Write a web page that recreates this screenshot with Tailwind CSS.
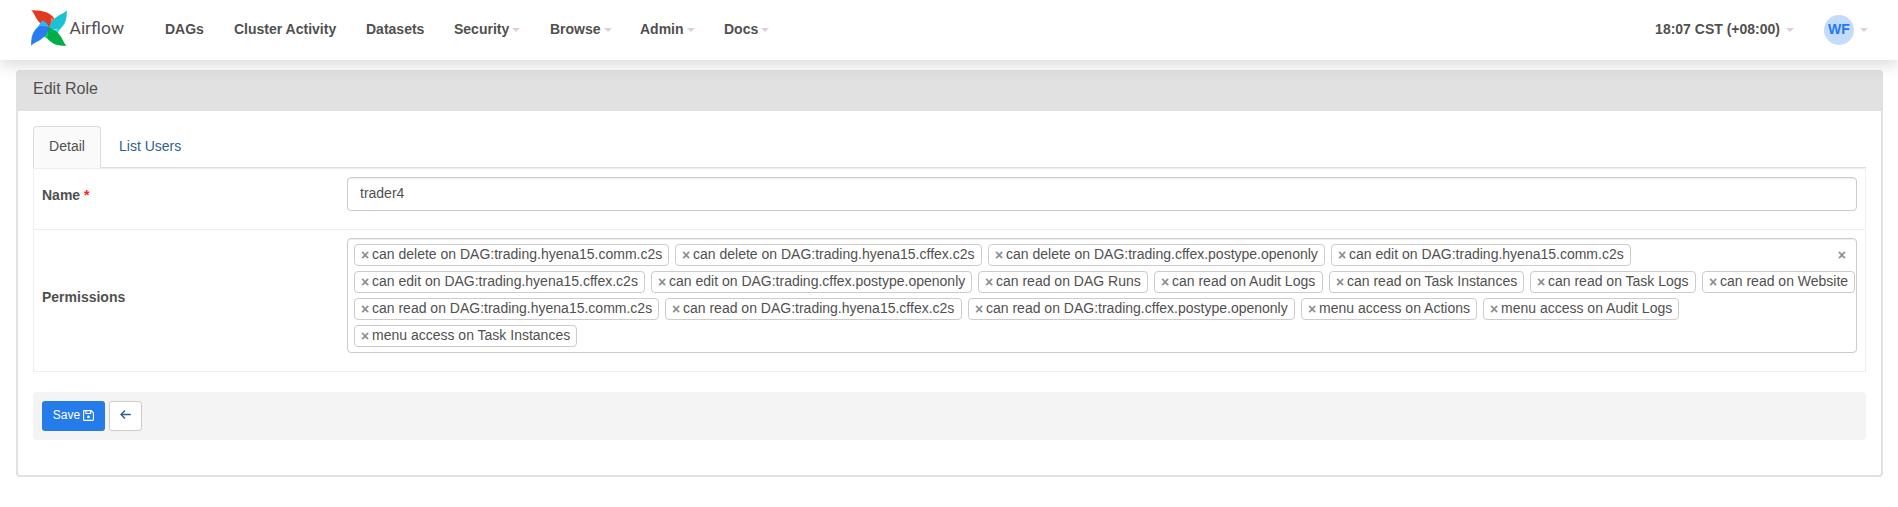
<!DOCTYPE html>
<html lang="en">
<head>
<meta charset="utf-8">
<title>Airflow - Edit Role</title>
<script src="https://cdn.jsdelivr.net/npm/@tailwindcss/browser@4"></script>
</head>
<body class="h-[507px] overflow-hidden bg-white font-['Liberation_Sans',sans-serif] text-sm leading-5 text-[#51504f]">
<nav class="relative z-10 flex h-[60px] items-center bg-white pl-[31px] pr-[30px] font-bold shadow-[0_5px_15px_rgba(0,0,0,0.15)]">
  <a class="mr-10 flex h-9 w-[94px] -translate-y-0.5">
    <svg class="h-9 w-[94px]" viewBox="0 0 94 36">
      <defs>
        <path id="blade" d="M18 18.200C20 16 23 13 24.800 11C21 2.500 12 0 .2 .2C5 4 4.500 13.500 18 18.200Z"/>
        <path id="fold" d="M18 18.200C19.800 15 20.300 11 19.900 7.800C22.500 8.600 24 9.800 25.500 11.500C24 15 21.500 17 18 18.200Z"/>
      </defs>
      <use href="#blade" fill="#e43921"/>
      <use href="#fold" fill="#ff7557"/>
      <use href="#fold" fill="#11e1ee" transform="rotate(90 18 18)"/>
      <use href="#fold" fill="#04d659" transform="rotate(180 18 18)"/>
      <use href="#fold" fill="#27b8ff" transform="rotate(270 18 18)"/>
      <path fill="#1cc2d3" transform="rotate(90 18 18)" d="M18 18.200C20 16 19.800 11 19.900 7.800C14 1 8 0 .2 .2C5 4 4.500 13.500 18 18.200Z"/>
      <path fill="#00ad46" transform="rotate(180 18 18)" d="M18 18.200C20 16 19.800 11 19.900 7.800C14 1 8 0 .2 .2C5 4 4.500 13.500 18 18.200Z"/>
      <path fill="#277def" transform="rotate(270 18 18)" d="M18 18.200C20 16 19.800 11 19.900 7.800C14 1 8 0 .2 .2C5 4 4.500 13.500 18 18.200Z"/>
      <circle cx="18" cy="18" r=".6" fill="#51504f"/>
      <text x="38.500" y="24" fill="#51504f" font-size="17" font-weight="400" font-family="Roboto, sans-serif" textLength="54.500" lengthAdjust="spacingAndGlyphs">Airflow</text>
    </svg>
  </a>
  <div class="flex -translate-y-px items-center whitespace-nowrap">
    <a class="w-[69px]">DAGs</a>
    <a class="w-[132px]">Cluster Activity</a>
    <a class="w-[88px]">Datasets</a>
    <a class="flex w-24 items-center gap-[3px]">Security<svg class="mt-0.5 h-1 w-2 shrink-0" viewBox="0 0 8 4"><path fill="#e0cde0" d="M0 0h8L4 4z"/></svg></a>
    <a class="flex w-[90px] items-center gap-[3px]">Browse<svg class="mt-0.5 h-1 w-2 shrink-0" viewBox="0 0 8 4"><path fill="#e0cde0" d="M0 0h8L4 4z"/></svg></a>
    <a class="flex w-[84px] items-center gap-[3px]">Admin<svg class="mt-0.5 h-1 w-2 shrink-0" viewBox="0 0 8 4"><path fill="#e0cde0" d="M0 0h8L4 4z"/></svg></a>
    <a class="flex items-center gap-[3px]">Docs<svg class="mt-0.5 h-1 w-2 shrink-0" viewBox="0 0 8 4"><path fill="#e0cde0" d="M0 0h8L4 4z"/></svg></a>
  </div>
  <div class="ml-auto flex items-center">
    <a class="mr-[30px] flex -translate-y-px items-center gap-1.5">18:07 CST (+08:00)<svg class="mt-0.5 h-1 w-2 shrink-0" viewBox="0 0 8 4"><path fill="#e0cde0" d="M0 0h8L4 4z"/></svg></a>
    <span class="flex size-[30px] items-center justify-center rounded-full bg-[#c2dcfa] pb-0.5 text-[#2478ee]">WF</span>
    <svg class="ml-1.5 h-1 w-2" viewBox="0 0 8 4"><path fill="#e0cde0" d="M0 0h8L4 4z"/></svg>
  </div>
</nav>

<main class="mx-4 mt-2.5 h-[407px] w-[1867px] rounded border-2 border-[#e1e1e1]">
  <h1 class="h-[39px] bg-[#e1e1e1] pl-[15px] pt-[7px] text-base leading-5">Edit Role</h1>
  <div class="px-[15px] pt-[15px]">
    <div class="flex h-[42px] border-b border-[#ddd]">
      <a class="mr-0.5 flex h-[42px] w-[68px] justify-center rounded-t border border-b-0 border-[#ddd] bg-[#fafafa] pt-[9px]">Detail</a>
      <a class="pl-4 pt-2.5 text-[#2f5f8f]">List Users</a>
    </div>
    <div class="h-[204px] border border-[#eee]">
      <div class="flex h-[61px] border-b border-[#eee] pl-2 pt-2">
        <label class="w-[305px] pt-2 font-bold">Name <span class="text-[#ff2020]">*</span></label>
        <div class="h-[34px] w-[1510px] rounded border border-[#ccc] pl-3 pt-[5px] shadow-[inset_0_1px_1px_rgba(0,0,0,0.075)]">trader4</div>
      </div>
      <div class="flex pl-2 pt-2">
        <label class="w-[305px] pt-[49px] font-bold">Permissions</label>
        <div class="relative flex h-[115px] w-[1510px] flex-col gap-[5px] rounded border border-[#ccc] pl-1.5 pt-[5px] shadow-[inset_0_1px_1px_rgba(0,0,0,0.075)]" id="perms"></div>
      </div>
    </div>
    <div class="mt-5 flex h-12 w-full gap-1 rounded bg-[#f4f4f4] pl-[9px] pt-[9px]">
      <button class="flex h-[30px] w-[63px] items-center justify-center gap-[3px] rounded-[3px] bg-[#267bea] pb-0.5 text-xs text-white">Save
        <svg class="h-[11px] w-[11px]" viewBox="0 0 11 11" fill="none" stroke="#fff" stroke-width="1.100"><path d="M1.200.6H8.200L10.400 2.800V9.800Q10.400 10.400 9.800 10.400H1.200Q.6 10.400.6 9.800V1.200Q.6.6 1.200.6ZM2.900.6V3.500H7.700V.6"/><circle cx="5.500" cy="6.900" r="1.300" fill="#fff" stroke="none"/></svg>
      </button>
      <button class="flex h-[30px] w-[33px] items-center justify-center rounded-[3px] border border-[#ccc] bg-white pb-[3px]">
        <svg class="h-[9px] w-[11px]" viewBox="0 0 11 9" fill="none" stroke="#2f5f8f" stroke-width="1.400"><path d="M5 .5L1 4.500L5 8.500M1 4.500H10.800"/></svg>
      </button>
    </div>
  </div>
</main>
<script>
// Each permission is [label, tag width in px].
const rows = [
  [['can delete on DAG:trading.hyena15.comm.c2s',315],['can delete on DAG:trading.hyena15.cffex.c2s',307],['can delete on DAG:trading.cffex.postype.openonly',337],['can edit on DAG:trading.hyena15.comm.c2s',300]],
  [['can edit on DAG:trading.hyena15.cffex.c2s',291],['can edit on DAG:trading.cffex.postype.openonly',321],['can read on DAG Runs',170],['can read on Audit Logs',169],['can read on Task Instances',195],['can read on Task Logs',166],['can read on Website',153]],
  [['can read on DAG:trading.hyena15.comm.c2s',305],['can read on DAG:trading.hyena15.cffex.c2s',297],['can read on DAG:trading.cffex.postype.openonly',327],['menu access on Actions',176],['menu access on Audit Logs',196]],
  [['menu access on Task Instances',223]]
];
document.getElementById('perms').innerHTML = rows.map(r => '<div class="flex gap-1.5">' + r.map(([t, w]) =>
  `<span class="flex h-[22px] shrink-0 whitespace-nowrap rounded border border-[#ccc] pl-[6px] leading-[18px]" style="width:${w}px"><b class="w-[11px] shrink-0 pt-px text-[#8c8c8c]">×</b><span>${t}</span></span>`).join('') + '</div>').join('')
  + '<b class="absolute right-[10px] top-[7px] leading-[18px] text-[#8c8c8c]">×</b>';
</script>
</body>
</html>
